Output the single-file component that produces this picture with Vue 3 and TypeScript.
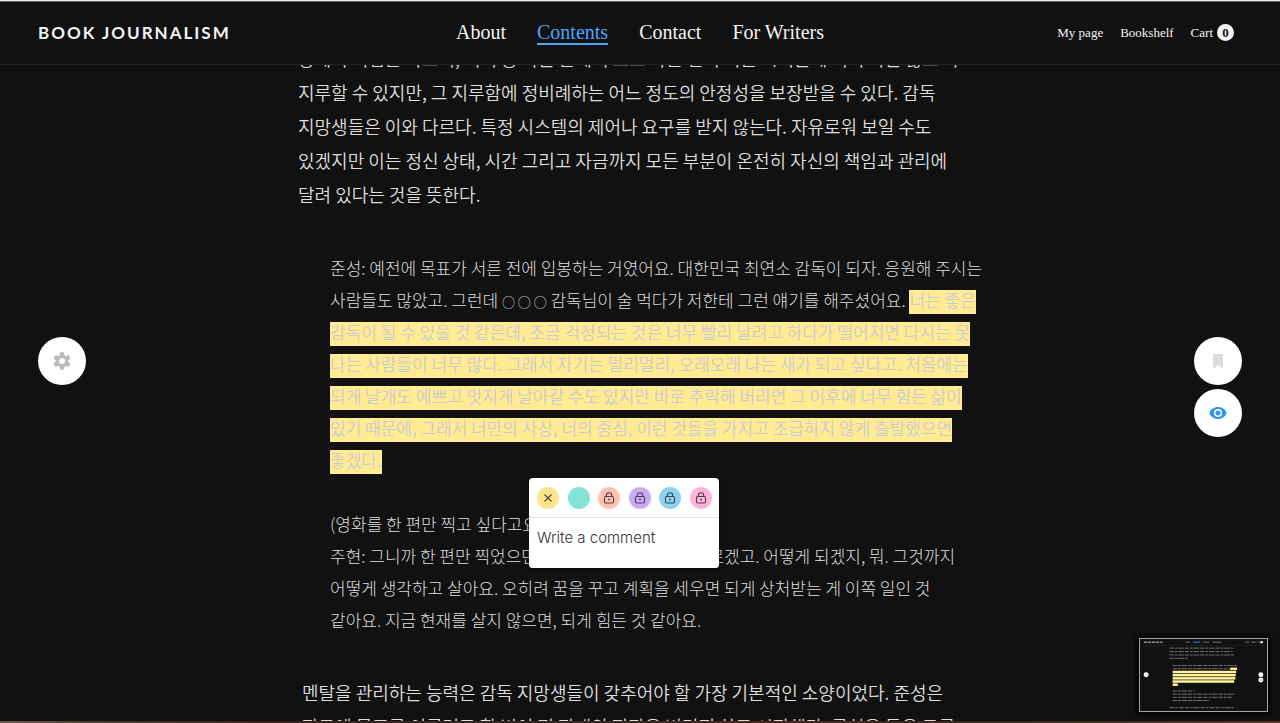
<script setup lang="ts">
import { ref } from 'vue'

interface NavItem { label: string; active?: boolean }
interface Swatch { name: string; kind: 'clear' | 'plain' | 'locked' }

const mainNav: NavItem[] = [
  { label: 'About' },
  { label: 'Contents', active: true },
  { label: 'Contact' },
  { label: 'For Writers' },
]
const accountNav = ['My page', 'Bookshelf']
const cartCount = ref(0)
const comment = ref('')

const opening = [
  '상에서 직업은 다르지, 거기 중 가는 문에서 그도 다른 인기 이를 시키는데 여기 자는 않고 다',
  '지루할 수 있지만, 그 지루함에 정비례하는 어느 정도의 안정성을 보장받을 수 있다. 감독',
  '지망생들은 이와 다르다. 특정 시스템의 제어나 요구를 받지 않는다. 자유로워 보일 수도',
  '있겠지만 이는 정신 상태, 시간 그리고 자금까지 모든 부분이 온전히 자신의 책임과 관리에',
  '달려 있다는 것을 뜻한다.',
]
const marked = [
  '감독이 될 수 있을 것 같은데, 조금 걱정되는 것은 너무 빨리 날려고 하다가 떨어지면 다시는 못',
  '나는 사람들이 너무 많다. 그래서 자기는 멀리멀리, 오래오래 나는 새가 되고 싶다고. 처음에는',
  '되게 날개도 예쁘고 멋지게 날아갈 수도 있지만 바로 추락해 버리면 그 이후에 너무 힘든 삶이',
  '있기 때문에, 그래서 너만의 사상, 너의 중심, 이런 것들을 가지고 조급하지 않게 출발했으면',
  '좋겠다.',
]
const answer = [
  '(영화를 한 편만 찍고 싶다고요?)',
  '주현: 그니까 한 편만 찍었으면 좋겠는데 앞으로는 잘 모르겠고. 어떻게 되겠지, 뭐. 그것까지',
  '어떻게 생각하고 살아요. 오히려 꿈을 꾸고 계획을 세우면 되게 상처받는 게 이쪽 일인 것',
  '같아요. 지금 현재를 살지 않으면, 되게 힘든 것 같아요.',
]
const closing = [
  '멘탈을 관리하는 능력은 감독 지망생들이 갖추어야 할 가장 기본적인 소양이었다. 준성은',
  '자그에 목표를 이루려고 할 번이 전 장래의 직장을 버리지 하고 시작했다. 글처음 등은 그를',
]

const swatches: Swatch[] = [
  { name: 'yellow', kind: 'clear' },
  { name: 'mint', kind: 'plain' },
  { name: 'coral', kind: 'locked' },
  { name: 'violet', kind: 'locked' },
  { name: 'sky', kind: 'locked' },
  { name: 'pink', kind: 'locked' },
]

// Text rows of the page overview: [x, y, width] in page units
const overviewRows: number[][] = [
  [298, 92, 640], [298, 127, 636], [298, 161, 650], [298, 195, 182],
  [330, 268, 650], [330, 300, 576],
  [330, 524, 220], [330, 556, 626], [330, 588, 600], [330, 620, 370],
  [302, 692, 642],
]
const overviewMarks: number[][] = [
  [910, 288, 68], [329, 320, 640], [329, 352, 636], [329, 384, 632], [329, 416, 620], [329, 448, 52],
]
</script>

<template>
  <div class="page">
    <header class="header">
      <a class="logo" href="#">BOOK JOURNALISM</a>
      <nav class="main-nav" aria-label="Main">
        <a v-for="item in mainNav" :key="item.label" href="#" :class="{ active: item.active }">{{ item.label }}</a>
      </nav>
      <nav class="account-nav" aria-label="Account">
        <a v-for="label in accountNav" :key="label" href="#">{{ label }}</a>
        <a href="#" class="cart">Cart <span class="count">{{ cartCount }}</span></a>
      </nav>
    </header>

    <main class="reader">
      <article class="article">
        <p class="body-text">
          <span v-for="line in opening" :key="line" class="line">{{ line }}</span>
        </p>
        <blockquote class="quote">
          <p>
            <span class="line">준성: 예전에 목표가 서른 전에 입봉하는 거였어요. 대한민국 최연소 감독이 되자. 응원해 주시는</span>
            <span class="line">사람들도 많았고. 그런데 <span class="redacted">○ ○ ○</span> 감독님이 술 먹다가 저한테 그런 얘기를 해주셨어요. <mark>너는 좋은</mark></span>
            <span v-for="line in marked" :key="line" class="line"><mark>{{ line }}</mark></span>
          </p>
          <p>
            <span v-for="line in answer" :key="line" class="line">{{ line }}</span>
          </p>

          <form class="popup" @submit.prevent>
            <div class="swatches">
              <button v-for="s in swatches" :key="s.name" type="button" class="swatch" :class="s.name" :aria-label="s.name">
                <svg v-if="s.kind === 'clear'" viewBox="0 0 22 22" aria-hidden="true">
                  <path d="M7.5 7.5l7 7M14.5 7.5l-7 7" />
                </svg>
                <svg v-else-if="s.kind === 'locked'" viewBox="0 0 22 22" aria-hidden="true">
                  <rect x="6.5" y="9.5" width="9" height="6.5" rx="1.2" />
                  <path d="M8.3 9.3V8.4a2.7 2.7 0 0 1 5.4 0v.9" />
                  <circle class="dot" cx="11" cy="12.5" r=".9" />
                </svg>
              </button>
            </div>
            <textarea v-model="comment" rows="1" placeholder="Write a comment" aria-label="Write a comment"></textarea>
          </form>
        </blockquote>
        <p class="body-text closing">
          <span v-for="line in closing" :key="line" class="line">{{ line }}</span>
        </p>
      </article>
    </main>

    <div class="desk"></div>

    <div class="tools tools-left">
      <button type="button" aria-label="Settings">
        <svg width="18" height="18" viewBox="0 0 18 18" aria-hidden="true">
          <g fill="#bcbcbc">
            <circle cx="9" cy="9" r="6.3" />
            <rect x="6.7" y="0.3" width="4.6" height="17.4" rx="1" />
            <rect x="6.7" y="0.3" width="4.6" height="17.4" rx="1" transform="rotate(60 9 9)" />
            <rect x="6.7" y="0.3" width="4.6" height="17.4" rx="1" transform="rotate(120 9 9)" />
          </g>
          <circle cx="9" cy="9" r="3" fill="#fff" />
        </svg>
      </button>
    </div>
    <div class="tools tools-right">
      <button type="button" aria-label="Bookmark">
        <svg width="18" height="18" viewBox="0 0 18 18" aria-hidden="true">
          <path d="M4 2h10v15l-5-4-5 4z" fill="#dcdcdc" />
        </svg>
      </button>
      <button type="button" aria-label="Show highlights">
        <svg width="18" height="18" viewBox="0 0 18 18" aria-hidden="true">
          <path d="M9 3C5 3 1.700 5.400.3 9c1.400 3.600 4.700 6 8.700 6s7.300-2.400 8.700-6C16.300 5.400 13 3 9 3z" fill="#2f93f3" />
          <circle cx="9" cy="9" r="4" fill="#fff" />
          <circle cx="9" cy="9" r="2.500" fill="#2f93f3" />
        </svg>
      </button>
    </div>

    <aside class="overview" aria-label="Page overview">
      <svg viewBox="0 0 1280 723" aria-hidden="true">
        <rect width="1280" height="723" fill="#111" />
        <g class="ov-text">
          <path d="M38 32H230" stroke="#eee" stroke-dasharray="34 6" />
          <path d="M457 32h49M638 32h64M731 32h93M1057 32h46M1119 32h56M1190 32h24" />
          <path d="M535 32h74" stroke="#4ca0f5" />
          <path v-for="r in overviewRows" :key="r[1]" :d="`M${r[0]} ${r[1]}h${r[2]}`" stroke-dasharray="42 10 28 8 56 10" />
        </g>
        <path d="M0 64H1280" stroke="#333" stroke-width="4" />
        <rect v-for="m in overviewMarks" :key="m[1]" :x="m[0]" :y="m[1]" :width="m[2]" height="25" fill="#fff59a" />
        <g fill="#fff">
          <circle cx="1226" cy="32" r="12" />
          <circle cx="62" cy="361" r="25" />
          <circle cx="1218" cy="361" r="25" />
          <circle cx="1218" cy="413" r="25" />
        </g>
        <circle cx="1218" cy="413" r="8" fill="#2f93f3" />
        <circle cx="62" cy="361" r="8" fill="#bbb" />
      </svg>
    </aside>
  </div>
</template>

<style>
body {
  margin: 0;
  background: #111;
}
</style>

<style scoped>
.page {
  position: relative;
  display: flex;
  flex-direction: column;
  height: 100vh;
  overflow: hidden;
  box-sizing: border-box;
  background: #111;
  color: #dedede;
  font-family: "Liberation Serif", "Noto Sans CJK KR", serif;
}
a {
  color: inherit;
  text-decoration: none;
}
p {
  margin: 0;
}
.header {
  position: relative;
  flex: none;
  display: grid;
  grid-template-columns: 1fr auto 1fr;
  align-items: center;
  height: 65px;
  box-sizing: border-box;
  padding: 0 38px;
  border-top: 1px solid #e9efed;
  border-bottom: 1px solid #222;
  box-shadow: inset 0 1px 0 #5f6664;
  background: #111;
  color: #f4f4f4;
}
.logo {
  font: 700 17px/24px Lato, "Open Sans", sans-serif;
  letter-spacing: 2px;
}
.main-nav {
  display: flex;
  gap: 31px;
  font-size: 20px;
  line-height: 22px;
}
.main-nav a {
  border-bottom: 2px solid transparent;
}
.main-nav .active {
  color: #4ca5fb;
  border-color: #4ca5fb;
}
.account-nav {
  display: flex;
  justify-content: flex-end;
  align-items: center;
  gap: 17px;
  margin-right: 8px;
  font-size: 13px;
}
.cart {
  display: flex;
  align-items: center;
  gap: 4px;
}
.count {
  width: 17px;
  height: 17px;
  border-radius: 50%;
  background: #f2f2f2;
  color: #111;
  font-size: 13px;
  font-weight: 700;
  line-height: 17px;
  text-align: center;
}
.reader {
  flex: 1;
  min-height: 0;
  overflow: hidden;
}
.article {
  max-width: 684px;
  margin: -24px auto 0;
  font-family: "Noto Sans CJK KR", sans-serif;
  font-weight: 350;
}
.line {
  display: block;
  white-space: nowrap;
}
.body-text {
  font-size: 18px;
  line-height: 34px;
}
.closing {
  padding-left: 4px;
}
.quote {
  position: relative;
  display: grid;
  gap: 32px;
  margin: 41px 0 39px;
  padding-left: 32px;
  font-size: 17px;
  line-height: 32px;
  font-weight: 300;
}
.redacted {
  font-size: 13px;
  line-height: 16px;
}
mark {
  padding-bottom: 2px;
  background: linear-gradient(transparent 3px, #ffeb93 3px);
  color: #ccc;
  font-weight: 350;
}
.popup {
  position: absolute;
  top: 226px;
  left: 231px;
  width: 190px;
  height: 90px;
  display: flex;
  flex-direction: column;
  border-radius: 4px;
  overflow: hidden;
  background: #fff;
  box-shadow: 0 1px 3px rgba(0, 0, 0, 0.6);
}
.swatches {
  display: flex;
  justify-content: space-between;
  padding: 9px 7px 8px 8px;
  border-bottom: 1px solid #e4e4e4;
}
.swatch {
  width: 22px;
  height: 22px;
  padding: 0;
  border: 0;
  border-radius: 50%;
}
.swatch svg {
  display: block;
  width: 22px;
  height: 22px;
  fill: none;
  stroke: #444;
  stroke-width: 1.1;
}
.swatch .dot {
  fill: #444;
  stroke: none;
}
.yellow { background: #ffe48c; }
.mint { background: #82e4d6; }
.coral { background: #ffc2b0; }
.violet { background: #c9acf9; }
.sky { background: #8bd2f1; }
.pink { background: #ffb3d9; }
textarea {
  flex: 1;
  padding: 8px;
  border: 0;
  outline: 0;
  resize: none;
  background: #fff;
  color: #333;
  font: 300 15px/24px Inter, "Open Sans", sans-serif;
}
textarea::placeholder {
  color: #333;
  opacity: 1;
}
.desk {
  flex: none;
  height: 2px;
  background: linear-gradient(90deg, #6b5546, #4a3a33 8%, #3c1f1c 20%, #2c2a28 40%, #4a2420 60%, #352a22 80%, #5a3323);
}
.tools {
  position: absolute;
  top: calc(50% - 25px);
  display: grid;
  gap: 4px;
}
.tools-left {
  left: 38px;
}
.tools-right {
  right: 38px;
}
.tools button {
  display: grid;
  place-items: center;
  width: 48px;
  height: 48px;
  padding: 0;
  border: 0;
  border-radius: 50%;
  background: #fff;
}
.overview {
  position: absolute;
  right: 12px;
  bottom: 11px;
  width: 127px;
  border: 1px solid #a5a5a5;
  box-shadow: 0 0 3px 3px #050505;
}
.overview svg {
  display: block;
  width: 100%;
}
.ov-text {
  fill: none;
  stroke: #888;
  stroke-width: 8;
}
</style>
